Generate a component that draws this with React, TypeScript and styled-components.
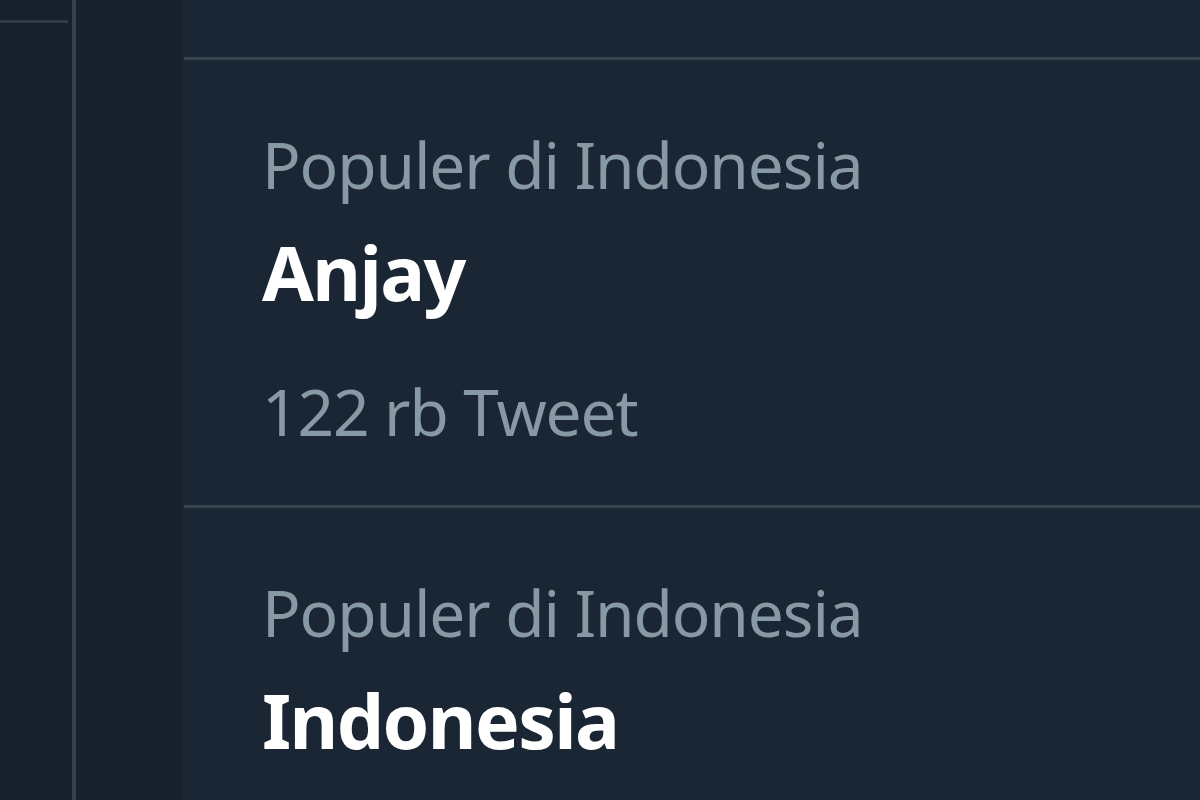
import React from "react";
import styled, { createGlobalStyle } from "styled-components";

const Global = createGlobalStyle`
  html, body { margin: 0; padding: 0; background: #16202a; }
  body { width: 1200px; height: 800px; overflow: hidden; font-family: "Noto Sans", "Open Sans", sans-serif; }
  #root { height: 800px; }
`;

const Page = styled.div`
  display: flex;
  height: 800px;
  background: #17212b;
`;

const LeftRail = styled.div`
  width: 72px;
  flex: none;
`;

const RailTop = styled.div`
  height: 20px;
  width: 68px;
  border-bottom: 3px solid #2f3b45;
`;

const VDivider = styled.div`
  width: 4px;
  flex: none;
  background: #34414b;
`;

const Gutter = styled.div`
  width: 106px;
  flex: none;
`;

const Panel = styled.section`
  flex: 1;
  background: #1a2633;
  padding-left: 2px;
`;

const PanelTop = styled.div`
  height: 57px;
`;

const Trend = styled.div`
  border-top: 3px solid #38444d;
  padding: 61px 0 50px 78px;
  display: flex;
  flex-direction: column;
`;

const Meta = styled.div<{ $gap?: number }>`
  color: #8899a6;
  font-size: 64px;
  line-height: 87px;
  letter-spacing: -1.1px;
  margin-top: ${(p) => p.$gap ?? 0}px;
`;

const Title = styled.div<{ $gap?: number }>`
  color: #ffffff;
  font-weight: 700;
  font-size: 75px;
  line-height: 102px;
  letter-spacing: -1.6px;
  margin-top: ${(p) => p.$gap ?? 0}px;
`;

const trends = [
  { ctx: "Populer di Indonesia", name: "Anjay", count: "122 rb Tweet" },
  { ctx: "Populer di Indonesia", name: "Indonesia" },
];

export default function App() {
  return (
    <>
      <Global />
      <Page>
        <LeftRail>
          <RailTop />
        </LeftRail>
        <VDivider />
        <Gutter />
        <Panel>
          <PanelTop />
          {trends.map((t, i) => (
            <Trend key={i}>
              <Meta>{t.ctx}</Meta>
              <Title $gap={13}>{t.name}</Title>
              {t.count && <Meta $gap={45}>{t.count}</Meta>}
            </Trend>
          ))}
        </Panel>
      </Page>
    </>
  );
}
